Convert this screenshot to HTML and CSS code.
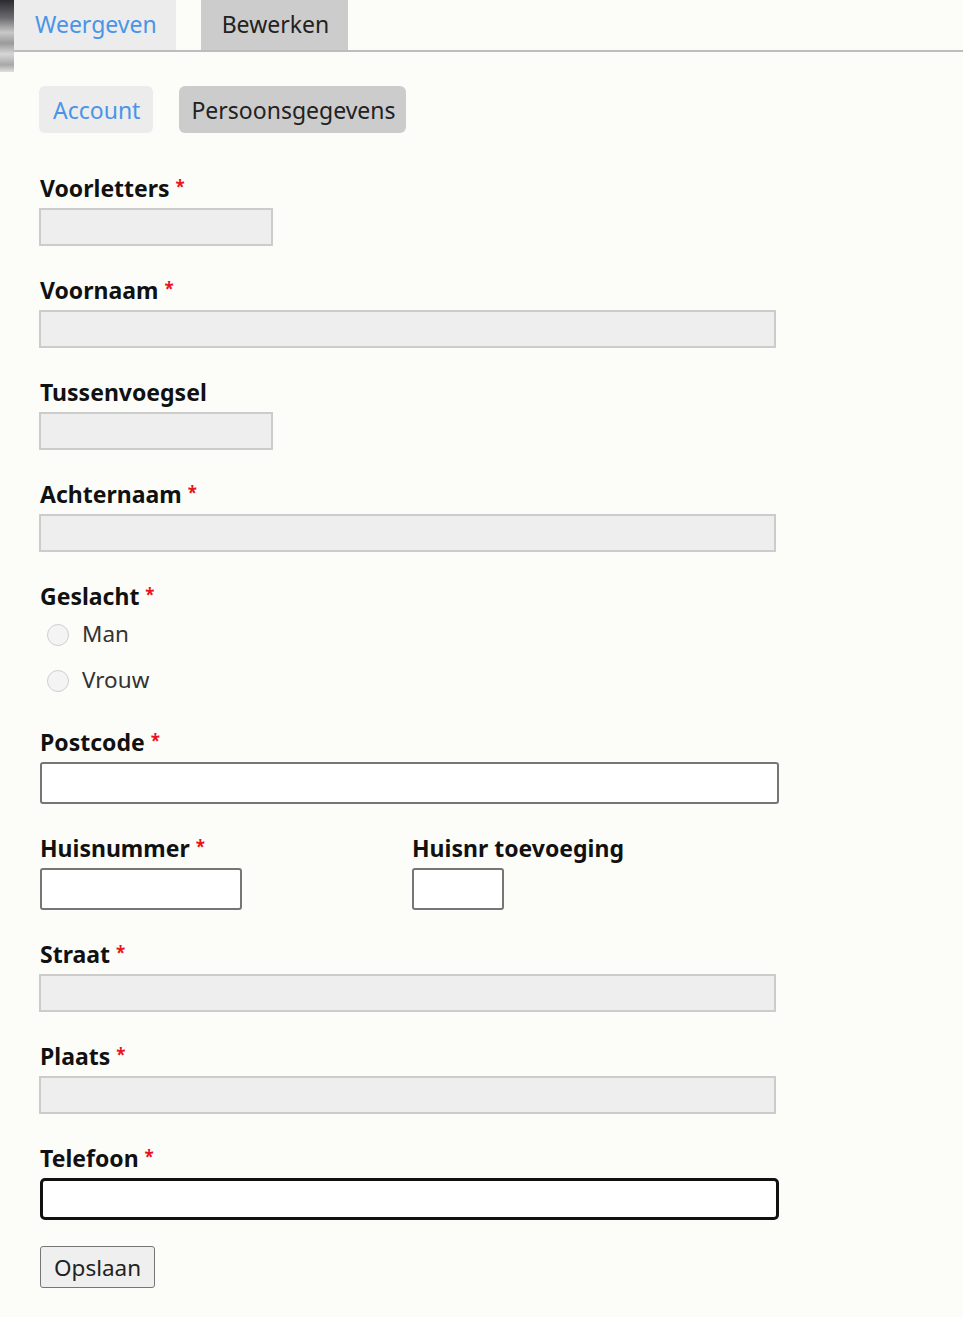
FILE: index.html
```html
<!DOCTYPE html>
<html lang="nl">
<head>
<meta charset="utf-8">
<title>Persoonsgegevens</title>
<link rel="stylesheet" href="styles.css">
</head>
<body>
<div class="page">
  <div class="side"><div class="side-img"></div></div>
  <div class="main">
    <nav class="tabs">
      <a class="tab tab-link" href="#">Weergeven</a>
      <a class="tab tab-active" href="#">Bewerken</a>
    </nav>
    <div class="content">
      <nav class="subtabs">
        <a class="subtab subtab-link" href="#">Account</a>
        <a class="subtab subtab-active" href="#">Persoonsgegevens</a>
      </nav>
      <form class="form">
        <div class="field">
          <label class="label">Voorletters <span class="req">*</span></label>
          <input class="input input-disabled input-short" type="text" disabled>
        </div>
        <div class="field">
          <label class="label">Voornaam <span class="req">*</span></label>
          <input class="input input-disabled input-long" type="text" disabled>
        </div>
        <div class="field">
          <label class="label">Tussenvoegsel</label>
          <input class="input input-disabled input-short" type="text" disabled>
        </div>
        <div class="field">
          <label class="label">Achternaam <span class="req">*</span></label>
          <input class="input input-disabled input-long" type="text" disabled>
        </div>
        <div class="field field-radio">
          <label class="label">Geslacht <span class="req">*</span></label>
          <div class="radio-row"><span class="radio"></span><span class="radio-text">Man</span></div>
          <div class="radio-row"><span class="radio"></span><span class="radio-text">Vrouw</span></div>
        </div>
        <div class="field">
          <label class="label">Postcode <span class="req">*</span></label>
          <input class="input input-edit input-full" type="text">
        </div>
        <div class="field-pair">
          <div class="field col-a">
            <label class="label">Huisnummer <span class="req">*</span></label>
            <input class="input input-edit input-num" type="text">
          </div>
          <div class="field">
            <label class="label">Huisnr toevoeging</label>
            <input class="input input-edit input-add" type="text">
          </div>
        </div>
        <div class="field">
          <label class="label">Straat <span class="req">*</span></label>
          <input class="input input-disabled input-long" type="text" disabled>
        </div>
        <div class="field">
          <label class="label">Plaats <span class="req">*</span></label>
          <input class="input input-disabled input-long" type="text" disabled>
        </div>
        <div class="field field-last">
          <label class="label">Telefoon <span class="req">*</span></label>
          <input class="input input-focus input-full" type="text">
        </div>
        <button class="btn" type="button">Opslaan</button>
      </form>
    </div>
  </div>
</div>
</body>
</html>
```

FILE: styles.css
```css
html, body {
  margin: 0;
  padding: 0;
  background: #fcfdf9;
}
body {
  font-family: "Noto Sans", "Open Sans", sans-serif;
  color: #222;
}
.page {
  display: flex;
  min-height: 1317px;
}
.side {
  width: 14px;
  flex: none;
}
.side-img {
  height: 72px;
  background: linear-gradient(180deg, #2a2a30 0%, #6b6b70 25%, #c8c8c8 45%, #9a9a9a 60%, #d6d6d6 75%, #a8a8a8 90%, #e0e0e0 100%);
}
.main {
  flex: 1;
}
.tabs {
  display: flex;
  gap: 25px;
  height: 50px;
  border-bottom: 2px solid #bdbdbd;
}
.tab {
  display: flex;
  align-items: center;
  height: 47px;
  padding: 0 19px 3px 21px;
  font-size: 23px;
  text-decoration: none;
}
.tab-link {
  background: #ececec;
  color: #4a94e8;
}
.tab-active {
  background: #cccccc;
  color: #222;
}
.content {
  padding: 34px 0 0 25px;
}
.subtabs {
  display: flex;
  gap: 26px;
  margin-bottom: 41px;
}
.subtab {
  display: flex;
  align-items: center;
  height: 47px;
  padding: 0 10px 0 12px;
  border-radius: 6px;
  font-size: 23px;
  text-decoration: none;
}
.subtab-link {
  background: #ececec;
  color: #4a94e8;
  padding: 0 13px 0 14px;
}
.subtab-active {
  background: #cccccc;
  color: #222;
}
.form {
  display: flex;
  flex-direction: column;
}
.field {
  display: flex;
  flex-direction: column;
  align-items: flex-start;
  margin-bottom: 30px;
}
.label {
  font-weight: 700;
  font-size: 23px;
  line-height: 28px;
  margin-bottom: 6px;
  margin-left: 1px;
  color: #111;
}
.req {
  color: #e8141b;
  font-size: 17px;
  line-height: 0;
  vertical-align: 4px;
}
.input {
  box-sizing: border-box;
  display: block;
  margin: 0;
  font: inherit;
}
.input-disabled {
  height: 38px;
  background: #eeeeee;
  border: 2px solid #cccccc;
  border-radius: 0;
}
.input-short { width: 234px; }
.input-long { width: 737px; }
.input-edit {
  height: 42px;
  background: #ffffff;
  border: 2px solid #767676;
  border-radius: 3px;
  margin-left: 1px;
}
.input-full { width: 739px; }
.input-num { width: 202px; }
.input-add { width: 92px; }
.input-focus {
  height: 42px;
  background: #ffffff;
  border: 3px solid #111;
  border-radius: 5px;
  margin-left: 1px;
}
.field-radio {
  margin-bottom: 24px;
}
.field-radio .label {
  margin-bottom: 2px;
}
.radio-row {
  display: flex;
  align-items: center;
  gap: 13px;
  height: 46px;
  margin-left: 8px;
}
.radio {
  box-sizing: border-box;
  width: 22px;
  height: 22px;
  border: 1.5px solid #cfcfcf;
  border-radius: 50%;
  background: #f4f4f4;
}
.radio-text {
  font-size: 22.5px;
  line-height: 1;
  padding-bottom: 2px;
  color: #333;
}
.field-pair {
  display: flex;
}
.col-a {
  width: 372px;
}
.field-last {
  margin-bottom: 26px;
}
.btn {
  align-self: flex-start;
  margin-left: 1px;
  height: 42px;
  padding: 0 13px;
  background: #efefef;
  border: 1.5px solid #767676;
  border-radius: 3px;
  font-family: inherit;
  font-size: 22.5px;
  color: #222;
}
```
